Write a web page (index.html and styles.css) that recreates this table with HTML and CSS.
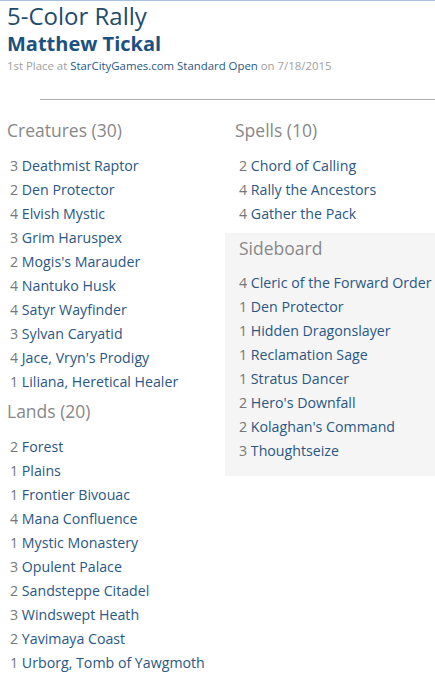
FILE: index.html
```html
<!DOCTYPE html>
<html>
<head>
<meta charset="utf-8">
<link rel="stylesheet" href="styles.css">
</head>
<body>
<div class="page">
  <header class="deck-header">
    <h1 class="deck-title">5-Color Rally</h1>
    <h2 class="deck-player">Matthew Tickal</h2>
    <p class="deck-meta">1st Place at <a href="#">StarCityGames.com Standard Open</a> on 7/18/2015</p>
  </header>
  <hr class="divider">
  <div class="deck">
    <div class="col col-left">
      <section class="group">
        <h3 class="group-title">Creatures (30)</h3>
        <ul class="cards">
          <li><span class="qty">3</span> <a href="#">Deathmist Raptor</a></li>
          <li><span class="qty">2</span> <a href="#">Den Protector</a></li>
          <li><span class="qty">4</span> <a href="#">Elvish Mystic</a></li>
          <li><span class="qty">3</span> <a href="#">Grim Haruspex</a></li>
          <li><span class="qty">2</span> <a href="#">Mogis's Marauder</a></li>
          <li><span class="qty">4</span> <a href="#">Nantuko Husk</a></li>
          <li><span class="qty">4</span> <a href="#">Satyr Wayfinder</a></li>
          <li><span class="qty">3</span> <a href="#">Sylvan Caryatid</a></li>
          <li><span class="qty">4</span> <a href="#">Jace, Vryn's Prodigy</a></li>
          <li><span class="qty">1</span> <a href="#">Liliana, Heretical Healer</a></li>
        </ul>
      </section>
      <section class="group">
        <h3 class="group-title">Lands (20)</h3>
        <ul class="cards">
          <li><span class="qty">2</span> <a href="#">Forest</a></li>
          <li><span class="qty">1</span> <a href="#">Plains</a></li>
          <li><span class="qty">1</span> <a href="#">Frontier Bivouac</a></li>
          <li><span class="qty">4</span> <a href="#">Mana Confluence</a></li>
          <li><span class="qty">1</span> <a href="#">Mystic Monastery</a></li>
          <li><span class="qty">3</span> <a href="#">Opulent Palace</a></li>
          <li><span class="qty">2</span> <a href="#">Sandsteppe Citadel</a></li>
          <li><span class="qty">3</span> <a href="#">Windswept Heath</a></li>
          <li><span class="qty">2</span> <a href="#">Yavimaya Coast</a></li>
          <li><span class="qty">1</span> <a href="#">Urborg, Tomb of Yawgmoth</a></li>
        </ul>
      </section>
    </div>
    <div class="col col-right">
      <section class="group group-spells">
        <h3 class="group-title">Spells (10)</h3>
        <ul class="cards">
          <li><span class="qty">2</span> <a href="#">Chord of Calling</a></li>
          <li><span class="qty">4</span> <a href="#">Rally the Ancestors</a></li>
          <li><span class="qty">4</span> <a href="#">Gather the Pack</a></li>
        </ul>
      </section>
      <section class="group sideboard">
        <h3 class="group-title">Sideboard</h3>
        <ul class="cards">
          <li><span class="qty">4</span> <a href="#">Cleric of the Forward Order</a></li>
          <li><span class="qty">1</span> <a href="#">Den Protector</a></li>
          <li><span class="qty">1</span> <a href="#">Hidden Dragonslayer</a></li>
          <li><span class="qty">1</span> <a href="#">Reclamation Sage</a></li>
          <li><span class="qty">1</span> <a href="#">Stratus Dancer</a></li>
          <li><span class="qty">2</span> <a href="#">Hero's Downfall</a></li>
          <li><span class="qty">2</span> <a href="#">Kolaghan's Command</a></li>
          <li><span class="qty">3</span> <a href="#">Thoughtseize</a></li>
        </ul>
      </section>
    </div>
  </div>
</div>
</body>
</html>
```

FILE: styles.css
```css
* { box-sizing: border-box; }
html, body {
  margin: 0;
  padding: 0;
  background: #fff;
  font-family: "Open Sans", "DejaVu Sans", sans-serif;
  overflow: hidden;
}
.page {
  border-top: 1px solid #a9c1dd;
  width: 435px;
}
a { text-decoration: none; color: #2a5784; }
.deck-header { padding: 0 0 0 7px; }
.deck-title {
  margin: 0;
  font-size: 24px;
  line-height: 30px;
  font-weight: 400;
  color: #244a6c;
}
.deck-player {
  margin: 0;
  font-size: 20px;
  line-height: 26px;
  font-weight: 700;
  color: #1c5080;
}
.deck-meta {
  margin: 1px 0 0;
  font-size: 11.4px;
  line-height: 16px;
  color: #a0a0a0;
}
.deck-meta a { color: #2a5784; }
.divider {
  margin: 25px 0 0 40px;
  border: 0;
  border-top: 1px solid #b0b0b0;
  height: 0;
}
.deck {
  display: flex;
  padding-top: 17px;
}
.col-left { width: 225px; padding-left: 7px; }
.col-right { width: 210px; }
.group-title {
  margin: 0 0 11px;
  font-size: 17.5px;
  line-height: 26px;
  font-weight: 400;
  color: #888;
}
.cards {
  list-style: none;
  margin: 0;
  padding: 0 0 0 3px;
  font-size: 14.2px;
  line-height: 24px;
  white-space: nowrap;
}
.qty { color: #777; }
.group + .group { margin-top: 4px; }
.group-spells .group-title { padding-left: 10px; }
.group-spells .cards { padding-left: 14px; }
.sideboard {
  background: #f5f5f5;
  margin-top: 7px !important;
  padding: 2px 0 13px 14px;
}
.sideboard .group-title { margin-bottom: 10px; }
.sideboard .cards { padding-left: 0; }
```
